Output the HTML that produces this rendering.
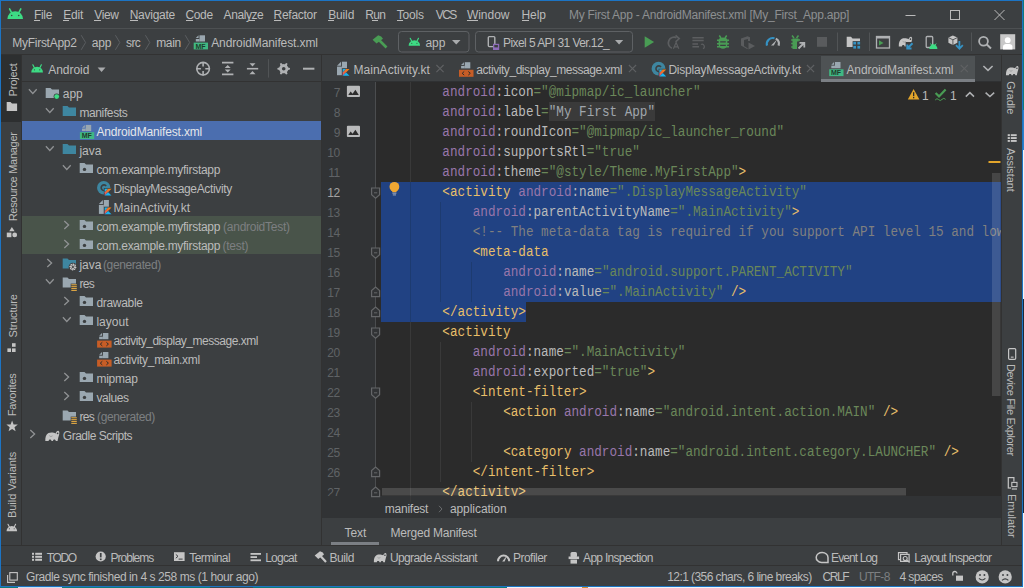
<!DOCTYPE html>
<html><head><meta charset="utf-8"><style>
html,body{margin:0;padding:0;width:1024px;height:588px;overflow:hidden;background:#0f7a7a;}
#r div,#r svg{position:absolute;}
#r{position:absolute;left:0;top:0;width:1024px;height:588px;overflow:hidden;}
</style></head><body><div id="r">
<div style="left:0px;top:0px;width:1024px;height:588px;background:#0f7a7a;"></div>
<div style="left:1023px;top:110px;width:1px;height:40px;background:#2f80c8;"></div>
<div style="left:1023px;top:150px;width:1px;height:149px;background:#f2f4f6;"></div>
<div style="left:1023px;top:299px;width:1px;height:214px;background:#1d2a36;"></div>
<div style="left:1023px;top:513px;width:1px;height:75px;background:#f2f4f6;"></div>
<div style="left:18px;top:587px;width:44px;height:1px;background:#cfe0f0;"></div>
<div style="left:210px;top:587px;width:43px;height:1px;background:#3a4a50;"></div>
<div style="left:507px;top:587px;width:517px;height:1px;background:#f2f4f6;"></div>
<div style="left:582px;top:587px;width:6px;height:1px;background:#d08a2a;"></div>
<div style="left:0px;top:0px;width:1023px;height:587px;background:#1c74c4;"></div>
<div style="left:1px;top:1px;width:1021px;height:585px;background:#3c3f41;"></div>
<div style="left:1px;top:28px;width:1021px;height:1px;background:#4d5052;"></div>
<div style="left:1px;top:54px;width:1021px;height:1px;background:#323232;"></div>
<div style="left:1px;top:55px;width:20px;height:490px;background:#3c3f41;"></div>
<div style="left:1px;top:55px;width:20px;height:67px;background:#2d2f30;"></div>
<div style="left:21px;top:55px;width:1px;height:490px;background:#323232;"></div>
<div style="left:22px;top:55px;width:299px;height:26px;background:#3c3f41;"></div>
<div style="left:22px;top:81px;width:299px;height:1px;background:#323232;"></div>
<div style="left:321px;top:55px;width:1px;height:490px;background:#323232;"></div>
<div style="left:22px;top:121px;width:299px;height:19px;background:#4b6eaf;"></div>
<div style="left:22px;top:216px;width:299px;height:38px;background:#49544a;"></div>
<div style="left:322px;top:55px;width:679px;height:27px;background:#3c3f41;"></div>
<div style="left:322px;top:81px;width:679px;height:1px;background:#2f3133;"></div>
<div style="left:821px;top:56px;width:154px;height:26px;background:#4e5254;"></div>
<div style="left:821px;top:79px;width:154px;height:3px;background:#7b7f84;"></div>
<div style="left:1001px;top:55px;width:1px;height:490px;background:#323232;"></div>
<div style="left:1002px;top:55px;width:20px;height:490px;background:#3c3f41;"></div>
<div style="left:322px;top:82px;width:679px;height:414px;background:#2b2b2b;"></div>
<div style="left:322px;top:82px;width:53px;height:414px;background:#313335;"></div>
<div style="left:375px;top:82px;width:1px;height:414px;background:#4a4c4e;"></div>
<div style="left:381px;top:182px;width:620px;height:120px;background:#214283;"></div>
<div style="left:381px;top:302px;width:145px;height:20px;background:#214283;"></div>
<div style="left:549px;top:102px;width:106px;height:19px;background:#3a3a3a;"></div>
<div style="left:322px;top:496px;width:679px;height:22px;background:#313335;"></div>
<div style="left:322px;top:518px;width:679px;height:27px;background:#3c3f41;"></div>
<div style="left:331px;top:542px;width:48px;height:3px;background:#7b7f84;"></div>
<div style="left:1px;top:545px;width:1021px;height:1px;background:#323232;"></div>
<div style="left:1px;top:565px;width:1021px;height:1px;background:#323232;"></div>
<div style="left:34.00px;top:8.34px;line-height:15px;font-family:'Liberation Sans', sans-serif;font-size:12px;color:#bbbbbb;white-space:pre;letter-spacing:-0.336px;">File</div>
<div style="left:63.20px;top:8.34px;line-height:15px;font-family:'Liberation Sans', sans-serif;font-size:12px;color:#bbbbbb;white-space:pre;letter-spacing:-0.172px;">Edit</div>
<div style="left:94.20px;top:8.34px;line-height:15px;font-family:'Liberation Sans', sans-serif;font-size:12px;color:#bbbbbb;white-space:pre;letter-spacing:-0.324px;">View</div>
<div style="left:129.70px;top:8.34px;line-height:15px;font-family:'Liberation Sans', sans-serif;font-size:12px;color:#bbbbbb;white-space:pre;letter-spacing:-0.259px;">Navigate</div>
<div style="left:185.50px;top:8.34px;line-height:15px;font-family:'Liberation Sans', sans-serif;font-size:12px;color:#bbbbbb;white-space:pre;letter-spacing:-0.372px;">Code</div>
<div style="left:223.60px;top:8.34px;line-height:15px;font-family:'Liberation Sans', sans-serif;font-size:12px;color:#bbbbbb;white-space:pre;letter-spacing:-0.415px;">Analyze</div>
<div style="left:273.60px;top:8.34px;line-height:15px;font-family:'Liberation Sans', sans-serif;font-size:12px;color:#bbbbbb;white-space:pre;letter-spacing:-0.282px;">Refactor</div>
<div style="left:328.20px;top:8.34px;line-height:15px;font-family:'Liberation Sans', sans-serif;font-size:12px;color:#bbbbbb;white-space:pre;letter-spacing:-0.138px;">Build</div>
<div style="left:365.20px;top:8.34px;line-height:15px;font-family:'Liberation Sans', sans-serif;font-size:12px;color:#bbbbbb;white-space:pre;letter-spacing:-0.672px;">Run</div>
<div style="left:396.70px;top:8.34px;line-height:15px;font-family:'Liberation Sans', sans-serif;font-size:12px;color:#bbbbbb;white-space:pre;letter-spacing:-0.163px;">Tools</div>
<div style="left:435.70px;top:8.34px;line-height:15px;font-family:'Liberation Sans', sans-serif;font-size:12px;color:#bbbbbb;white-space:pre;letter-spacing:-1.562px;">VCS</div>
<div style="left:466.90px;top:8.34px;line-height:15px;font-family:'Liberation Sans', sans-serif;font-size:12px;color:#bbbbbb;white-space:pre;letter-spacing:-0.015px;">Window</div>
<div style="left:521.50px;top:8.34px;line-height:15px;font-family:'Liberation Sans', sans-serif;font-size:12px;color:#bbbbbb;white-space:pre;letter-spacing:-0.097px;">Help</div>
<div style="left:34px;top:20px;width:6px;height:1px;background:#bbbbbb;"></div>
<div style="left:63px;top:20px;width:6px;height:1px;background:#bbbbbb;"></div>
<div style="left:94px;top:20px;width:7px;height:1px;background:#bbbbbb;"></div>
<div style="left:130px;top:20px;width:8px;height:1px;background:#bbbbbb;"></div>
<div style="left:186px;top:20px;width:7px;height:1px;background:#bbbbbb;"></div>
<div style="left:249px;top:20px;width:6px;height:1px;background:#bbbbbb;"></div>
<div style="left:274px;top:20px;width:7px;height:1px;background:#bbbbbb;"></div>
<div style="left:328px;top:20px;width:6px;height:1px;background:#bbbbbb;"></div>
<div style="left:372px;top:20px;width:6px;height:1px;background:#bbbbbb;"></div>
<div style="left:397px;top:20px;width:6px;height:1px;background:#bbbbbb;"></div>
<div style="left:467px;top:20px;width:11px;height:1px;background:#bbbbbb;"></div>
<div style="left:522px;top:20px;width:7px;height:1px;background:#bbbbbb;"></div>
<div style="left:568.90px;top:8.34px;line-height:15px;font-family:'Liberation Sans', sans-serif;font-size:12px;color:#8d8f91;white-space:pre;letter-spacing:-0.235px;">My First App - AndroidManifest.xml [My_First_App.app]</div>
<div style="left:12.20px;top:36.34px;line-height:15px;font-family:'Liberation Sans', sans-serif;font-size:12px;color:#bbbbbb;white-space:pre;letter-spacing:-0.260px;">MyFirstApp2</div>
<div style="left:91.80px;top:36.34px;line-height:15px;font-family:'Liberation Sans', sans-serif;font-size:12px;color:#bbbbbb;white-space:pre;letter-spacing:-0.210px;">app</div>
<div style="left:126.00px;top:36.34px;line-height:15px;font-family:'Liberation Sans', sans-serif;font-size:12px;color:#bbbbbb;white-space:pre;letter-spacing:-0.600px;">src</div>
<div style="left:156.20px;top:36.34px;line-height:15px;font-family:'Liberation Sans', sans-serif;font-size:12px;color:#bbbbbb;white-space:pre;letter-spacing:-0.354px;">main</div>
<div style="left:211.20px;top:36.34px;line-height:15px;font-family:'Liberation Sans', sans-serif;font-size:12px;color:#bbbbbb;white-space:pre;letter-spacing:-0.106px;">AndroidManifest.xml</div>
<div style="left:62.80px;top:87.34px;line-height:15px;font-family:'Liberation Sans', sans-serif;font-size:12px;color:#bbbbbb;white-space:pre;letter-spacing:-0.077px;">app</div>
<div style="left:79.40px;top:106.34px;line-height:15px;font-family:'Liberation Sans', sans-serif;font-size:12px;color:#bbbbbb;white-space:pre;letter-spacing:-0.373px;">manifests</div>
<div style="left:96.40px;top:125.34px;line-height:15px;font-family:'Liberation Sans', sans-serif;font-size:12px;color:#e4e6ea;white-space:pre;letter-spacing:-0.159px;">AndroidManifest.xml</div>
<div style="left:79.40px;top:144.34px;line-height:15px;font-family:'Liberation Sans', sans-serif;font-size:12px;color:#bbbbbb;white-space:pre;letter-spacing:-0.029px;">java</div>
<div style="left:96.40px;top:163.34px;line-height:15px;font-family:'Liberation Sans', sans-serif;font-size:12px;color:#bbbbbb;white-space:pre;letter-spacing:-0.288px;">com.example.myfirstapp</div>
<div style="left:113.40px;top:182.34px;line-height:15px;font-family:'Liberation Sans', sans-serif;font-size:12px;color:#bbbbbb;white-space:pre;letter-spacing:-0.338px;">DisplayMessageActivity</div>
<div style="left:113.40px;top:201.34px;line-height:15px;font-family:'Liberation Sans', sans-serif;font-size:12px;color:#bbbbbb;white-space:pre;letter-spacing:0.067px;">MainActivity.kt</div>
<div style="left:96.40px;top:220.34px;line-height:15px;font-family:'Liberation Sans', sans-serif;font-size:12px;color:#bbbbbb;white-space:pre;letter-spacing:-0.288px;">com.example.myfirstapp</div>
<div style="left:223.10px;top:220.34px;line-height:15px;font-family:'Liberation Sans', sans-serif;font-size:12px;color:#7d7f81;white-space:pre;letter-spacing:-0.264px;">(androidTest)</div>
<div style="left:96.40px;top:239.34px;line-height:15px;font-family:'Liberation Sans', sans-serif;font-size:12px;color:#bbbbbb;white-space:pre;letter-spacing:-0.288px;">com.example.myfirstapp</div>
<div style="left:222.40px;top:239.34px;line-height:15px;font-family:'Liberation Sans', sans-serif;font-size:12px;color:#7d7f81;white-space:pre;letter-spacing:-0.241px;">(test)</div>
<div style="left:79.40px;top:258.34px;line-height:15px;font-family:'Liberation Sans', sans-serif;font-size:12px;color:#bbbbbb;white-space:pre;letter-spacing:-0.029px;">java</div>
<div style="left:103.00px;top:258.34px;line-height:15px;font-family:'Liberation Sans', sans-serif;font-size:12px;color:#7d7f81;white-space:pre;letter-spacing:-0.386px;">(generated)</div>
<div style="left:79.40px;top:277.34px;line-height:15px;font-family:'Liberation Sans', sans-serif;font-size:12px;color:#bbbbbb;white-space:pre;letter-spacing:-0.657px;">res</div>
<div style="left:96.40px;top:296.34px;line-height:15px;font-family:'Liberation Sans', sans-serif;font-size:12px;color:#bbbbbb;white-space:pre;letter-spacing:-0.300px;">drawable</div>
<div style="left:96.40px;top:315.34px;line-height:15px;font-family:'Liberation Sans', sans-serif;font-size:12px;color:#bbbbbb;white-space:pre;letter-spacing:0.011px;">layout</div>
<div style="left:113.40px;top:334.34px;line-height:15px;font-family:'Liberation Sans', sans-serif;font-size:12px;color:#bbbbbb;white-space:pre;letter-spacing:-0.484px;">activity_display_message.xml</div>
<div style="left:113.40px;top:353.34px;line-height:15px;font-family:'Liberation Sans', sans-serif;font-size:12px;color:#bbbbbb;white-space:pre;letter-spacing:-0.286px;">activity_main.xml</div>
<div style="left:96.40px;top:372.34px;line-height:15px;font-family:'Liberation Sans', sans-serif;font-size:12px;color:#bbbbbb;white-space:pre;letter-spacing:-0.248px;">mipmap</div>
<div style="left:96.40px;top:391.34px;line-height:15px;font-family:'Liberation Sans', sans-serif;font-size:12px;color:#bbbbbb;white-space:pre;letter-spacing:-0.406px;">values</div>
<div style="left:79.40px;top:410.34px;line-height:15px;font-family:'Liberation Sans', sans-serif;font-size:12px;color:#bbbbbb;white-space:pre;letter-spacing:-0.657px;">res</div>
<div style="left:97.10px;top:410.34px;line-height:15px;font-family:'Liberation Sans', sans-serif;font-size:12px;color:#7d7f81;white-space:pre;letter-spacing:-0.386px;">(generated)</div>
<div style="left:62.80px;top:429.34px;line-height:15px;font-family:'Liberation Sans', sans-serif;font-size:12px;color:#bbbbbb;white-space:pre;letter-spacing:-0.481px;">Gradle Scripts</div>
<div style="left:48.20px;top:63.34px;line-height:15px;font-family:'Liberation Sans', sans-serif;font-size:12px;color:#bbbbbb;white-space:pre;letter-spacing:-0.039px;">Android</div>
<div style="left:353.40px;top:63.34px;line-height:15px;font-family:'Liberation Sans', sans-serif;font-size:12px;color:#bbbbbb;white-space:pre;letter-spacing:0.054px;">MainActivity.kt</div>
<div style="left:476.20px;top:63.34px;line-height:15px;font-family:'Liberation Sans', sans-serif;font-size:12px;color:#bbbbbb;white-space:pre;letter-spacing:-0.434px;">activity_display_message.xml</div>
<div style="left:668.40px;top:63.34px;line-height:15px;font-family:'Liberation Sans', sans-serif;font-size:12px;color:#bbbbbb;white-space:pre;letter-spacing:-0.213px;">DisplayMessageActivity.kt</div>
<div style="left:846.40px;top:63.34px;line-height:15px;font-family:'Liberation Sans', sans-serif;font-size:12px;color:#bbbbbb;white-space:pre;letter-spacing:-0.090px;">AndroidManifest.xml</div>
<div style="left:425.40px;top:36.34px;line-height:15px;font-family:'Liberation Sans', sans-serif;font-size:12px;color:#bbbbbb;white-space:pre;letter-spacing:-0.010px;">app</div>
<div style="left:503.10px;top:36.34px;line-height:15px;font-family:'Liberation Sans', sans-serif;font-size:12px;color:#bbbbbb;white-space:pre;letter-spacing:-0.580px;">Pixel 5 API 31 Ver.12_</div>
<div style="left:384.80px;top:502.34px;line-height:15px;font-family:'Liberation Sans', sans-serif;font-size:12px;color:#bbbbbb;white-space:pre;letter-spacing:-0.245px;">manifest</div>
<div style="left:449.90px;top:502.34px;line-height:15px;font-family:'Liberation Sans', sans-serif;font-size:12px;color:#bbbbbb;white-space:pre;letter-spacing:-0.061px;">application</div>
<div style="left:344.40px;top:526.34px;line-height:15px;font-family:'Liberation Sans', sans-serif;font-size:12px;color:#bbbbbb;white-space:pre;letter-spacing:-0.004px;">Text</div>
<div style="left:390.60px;top:526.34px;line-height:15px;font-family:'Liberation Sans', sans-serif;font-size:12px;color:#bbbbbb;white-space:pre;letter-spacing:-0.232px;">Merged Manifest</div>
<div style="left:46.80px;top:551.34px;line-height:15px;font-family:'Liberation Sans', sans-serif;font-size:12px;color:#bbbbbb;white-space:pre;letter-spacing:-1.363px;">TODO</div>
<div style="left:110.40px;top:551.34px;line-height:15px;font-family:'Liberation Sans', sans-serif;font-size:12px;color:#bbbbbb;white-space:pre;letter-spacing:-0.961px;">Problems</div>
<div style="left:189.20px;top:551.34px;line-height:15px;font-family:'Liberation Sans', sans-serif;font-size:12px;color:#bbbbbb;white-space:pre;letter-spacing:-0.557px;">Terminal</div>
<div style="left:265.20px;top:551.34px;line-height:15px;font-family:'Liberation Sans', sans-serif;font-size:12px;color:#bbbbbb;white-space:pre;letter-spacing:-0.772px;">Logcat</div>
<div style="left:329.40px;top:551.34px;line-height:15px;font-family:'Liberation Sans', sans-serif;font-size:12px;color:#bbbbbb;white-space:pre;letter-spacing:-0.417px;">Build</div>
<div style="left:389.90px;top:551.34px;line-height:15px;font-family:'Liberation Sans', sans-serif;font-size:12px;color:#bbbbbb;white-space:pre;letter-spacing:-0.599px;">Upgrade Assistant</div>
<div style="left:513.00px;top:551.34px;line-height:15px;font-family:'Liberation Sans', sans-serif;font-size:12px;color:#bbbbbb;white-space:pre;letter-spacing:-0.527px;">Profiler</div>
<div style="left:583.10px;top:551.34px;line-height:15px;font-family:'Liberation Sans', sans-serif;font-size:12px;color:#bbbbbb;white-space:pre;letter-spacing:-0.706px;">App Inspection</div>
<div style="left:831.10px;top:551.34px;line-height:15px;font-family:'Liberation Sans', sans-serif;font-size:12px;color:#bbbbbb;white-space:pre;letter-spacing:-0.905px;">Event Log</div>
<div style="left:914.30px;top:551.34px;line-height:15px;font-family:'Liberation Sans', sans-serif;font-size:12px;color:#bbbbbb;white-space:pre;letter-spacing:-0.740px;">Layout Inspector</div>
<div style="left:26.00px;top:570.34px;line-height:15px;font-family:'Liberation Sans', sans-serif;font-size:12px;color:#bbbbbb;white-space:pre;letter-spacing:-0.429px;">Gradle sync finished in 4 s 258 ms (1 hour ago)</div>
<div style="left:667.20px;top:570.34px;line-height:15px;font-family:'Liberation Sans', sans-serif;font-size:12px;color:#bbbbbb;white-space:pre;letter-spacing:-0.571px;">12:1 (356 chars, 6 line breaks)</div>
<div style="left:822.40px;top:570.34px;line-height:15px;font-family:'Liberation Sans', sans-serif;font-size:12px;color:#bbbbbb;white-space:pre;letter-spacing:-1.411px;">CRLF</div>
<div style="left:858.90px;top:570.34px;line-height:15px;font-family:'Liberation Sans', sans-serif;font-size:12px;color:#7d7f81;white-space:pre;letter-spacing:-0.640px;">UTF-8</div>
<div style="left:899.60px;top:570.34px;line-height:15px;font-family:'Liberation Sans', sans-serif;font-size:12px;color:#bbbbbb;white-space:pre;letter-spacing:-0.629px;">4 spaces</div>
<div style="left:921.90px;top:89.34px;line-height:15px;font-family:'Liberation Sans', sans-serif;font-size:12px;color:#bbbbbb;white-space:pre;letter-spacing:0.000px;">1</div>
<div style="left:949.90px;top:89.34px;line-height:15px;font-family:'Liberation Sans', sans-serif;font-size:12px;color:#bbbbbb;white-space:pre;letter-spacing:0.000px;">1</div>
<div style="left:0;top:0;width:1024px;height:588px;clip-path:inset(82px 23px 92px 381px)">
<div style="left:381.6px;top:83px;height:20px;line-height:20px;font-family:'Liberation Mono', monospace;font-size:12.667px;white-space:pre;color:#bababa;transform-origin:0 13.4px;transform:scaleY(1.12)">        <span style="color:#9876aa">android</span><span style="color:#bababa">:icon</span><span style="color:#6a8759">=&quot;@mipmap/ic_launcher&quot;</span></div>
<div style="left:381.6px;top:103px;height:20px;line-height:20px;font-family:'Liberation Mono', monospace;font-size:12.667px;white-space:pre;color:#bababa;transform-origin:0 13.4px;transform:scaleY(1.12)">        <span style="color:#9876aa">android</span><span style="color:#bababa">:label</span><span style="color:#6a8759">=</span><span style="color:#a0a6ac">&quot;My First App&quot;</span></div>
<div style="left:381.6px;top:123px;height:20px;line-height:20px;font-family:'Liberation Mono', monospace;font-size:12.667px;white-space:pre;color:#bababa;transform-origin:0 13.4px;transform:scaleY(1.12)">        <span style="color:#9876aa">android</span><span style="color:#bababa">:roundIcon</span><span style="color:#6a8759">=&quot;@mipmap/ic_launcher_round&quot;</span></div>
<div style="left:381.6px;top:143px;height:20px;line-height:20px;font-family:'Liberation Mono', monospace;font-size:12.667px;white-space:pre;color:#bababa;transform-origin:0 13.4px;transform:scaleY(1.12)">        <span style="color:#9876aa">android</span><span style="color:#bababa">:supportsRtl</span><span style="color:#6a8759">=&quot;true&quot;</span></div>
<div style="left:381.6px;top:163px;height:20px;line-height:20px;font-family:'Liberation Mono', monospace;font-size:12.667px;white-space:pre;color:#bababa;transform-origin:0 13.4px;transform:scaleY(1.12)">        <span style="color:#9876aa">android</span><span style="color:#bababa">:theme</span><span style="color:#6a8759">=&quot;@style/Theme.MyFirstApp&quot;</span><span style="color:#e8bf6a">&gt;</span></div>
<div style="left:381.6px;top:183px;height:20px;line-height:20px;font-family:'Liberation Mono', monospace;font-size:12.667px;white-space:pre;color:#bababa;transform-origin:0 13.4px;transform:scaleY(1.12)">        <span style="color:#e8bf6a">&lt;activity </span><span style="color:#9876aa">android</span><span style="color:#bababa">:name</span><span style="color:#6a8759">=&quot;.DisplayMessageActivity&quot;</span></div>
<div style="left:381.6px;top:203px;height:20px;line-height:20px;font-family:'Liberation Mono', monospace;font-size:12.667px;white-space:pre;color:#bababa;transform-origin:0 13.4px;transform:scaleY(1.12)">            <span style="color:#9876aa">android</span><span style="color:#bababa">:parentActivityName</span><span style="color:#6a8759">=&quot;.MainActivity&quot;</span><span style="color:#e8bf6a">&gt;</span></div>
<div style="left:381.6px;top:223px;height:20px;line-height:20px;font-family:'Liberation Mono', monospace;font-size:12.667px;white-space:pre;color:#bababa;transform-origin:0 13.4px;transform:scaleY(1.12)">            <span style="color:#808080">&lt;!-- The meta-data tag is required if you support API level 15 and lower --&gt;</span></div>
<div style="left:381.6px;top:243px;height:20px;line-height:20px;font-family:'Liberation Mono', monospace;font-size:12.667px;white-space:pre;color:#bababa;transform-origin:0 13.4px;transform:scaleY(1.12)">            <span style="color:#e8bf6a">&lt;meta-data</span></div>
<div style="left:381.6px;top:263px;height:20px;line-height:20px;font-family:'Liberation Mono', monospace;font-size:12.667px;white-space:pre;color:#bababa;transform-origin:0 13.4px;transform:scaleY(1.12)">                <span style="color:#9876aa">android</span><span style="color:#bababa">:name</span><span style="color:#6a8759">=&quot;android.support.PARENT_ACTIVITY&quot;</span></div>
<div style="left:381.6px;top:283px;height:20px;line-height:20px;font-family:'Liberation Mono', monospace;font-size:12.667px;white-space:pre;color:#bababa;transform-origin:0 13.4px;transform:scaleY(1.12)">                <span style="color:#9876aa">android</span><span style="color:#bababa">:value</span><span style="color:#6a8759">=&quot;.MainActivity&quot;</span><span style="color:#e8bf6a"> /&gt;</span></div>
<div style="left:381.6px;top:303px;height:20px;line-height:20px;font-family:'Liberation Mono', monospace;font-size:12.667px;white-space:pre;color:#bababa;transform-origin:0 13.4px;transform:scaleY(1.12)">        <span style="color:#e8bf6a">&lt;/activity&gt;</span></div>
<div style="left:381.6px;top:323px;height:20px;line-height:20px;font-family:'Liberation Mono', monospace;font-size:12.667px;white-space:pre;color:#bababa;transform-origin:0 13.4px;transform:scaleY(1.12)">        <span style="color:#e8bf6a">&lt;activity</span></div>
<div style="left:381.6px;top:343px;height:20px;line-height:20px;font-family:'Liberation Mono', monospace;font-size:12.667px;white-space:pre;color:#bababa;transform-origin:0 13.4px;transform:scaleY(1.12)">            <span style="color:#9876aa">android</span><span style="color:#bababa">:name</span><span style="color:#6a8759">=&quot;.MainActivity&quot;</span></div>
<div style="left:381.6px;top:363px;height:20px;line-height:20px;font-family:'Liberation Mono', monospace;font-size:12.667px;white-space:pre;color:#bababa;transform-origin:0 13.4px;transform:scaleY(1.12)">            <span style="color:#9876aa">android</span><span style="color:#bababa">:exported</span><span style="color:#6a8759">=&quot;true&quot;</span><span style="color:#e8bf6a">&gt;</span></div>
<div style="left:381.6px;top:383px;height:20px;line-height:20px;font-family:'Liberation Mono', monospace;font-size:12.667px;white-space:pre;color:#bababa;transform-origin:0 13.4px;transform:scaleY(1.12)">            <span style="color:#e8bf6a">&lt;intent-filter&gt;</span></div>
<div style="left:381.6px;top:403px;height:20px;line-height:20px;font-family:'Liberation Mono', monospace;font-size:12.667px;white-space:pre;color:#bababa;transform-origin:0 13.4px;transform:scaleY(1.12)">                <span style="color:#e8bf6a">&lt;action </span><span style="color:#9876aa">android</span><span style="color:#bababa">:name</span><span style="color:#6a8759">=&quot;android.intent.action.MAIN&quot;</span><span style="color:#e8bf6a"> /&gt;</span></div>
<div style="left:381.6px;top:423px;height:20px;line-height:20px;font-family:'Liberation Mono', monospace;font-size:12.667px;white-space:pre;color:#bababa;transform-origin:0 13.4px;transform:scaleY(1.12)"></div>
<div style="left:381.6px;top:443px;height:20px;line-height:20px;font-family:'Liberation Mono', monospace;font-size:12.667px;white-space:pre;color:#bababa;transform-origin:0 13.4px;transform:scaleY(1.12)">                <span style="color:#e8bf6a">&lt;category </span><span style="color:#9876aa">android</span><span style="color:#bababa">:name</span><span style="color:#6a8759">=&quot;android.intent.category.LAUNCHER&quot;</span><span style="color:#e8bf6a"> /&gt;</span></div>
<div style="left:381.6px;top:463px;height:20px;line-height:20px;font-family:'Liberation Mono', monospace;font-size:12.667px;white-space:pre;color:#bababa;transform-origin:0 13.4px;transform:scaleY(1.12)">            <span style="color:#e8bf6a">&lt;/intent-filter&gt;</span></div>
<div style="left:381.6px;top:483px;height:20px;line-height:20px;font-family:'Liberation Mono', monospace;font-size:12.667px;white-space:pre;color:#bababa;transform-origin:0 13.4px;transform:scaleY(1.12)">        <span style="color:#e8bf6a">&lt;/activity&gt;</span></div>
</div>
<div style="left:0;top:0;width:1024px;height:588px;clip-path:inset(82px 600px 92px 300px)">
<div style="left:300px;width:40px;top:83px;height:20px;line-height:20px;text-align:right;font-family:'Liberation Sans', sans-serif;font-size:12px;color:#606366;letter-spacing:-0.3px">7</div>
<div style="left:300px;width:40px;top:103px;height:20px;line-height:20px;text-align:right;font-family:'Liberation Sans', sans-serif;font-size:12px;color:#606366;letter-spacing:-0.3px">8</div>
<div style="left:300px;width:40px;top:123px;height:20px;line-height:20px;text-align:right;font-family:'Liberation Sans', sans-serif;font-size:12px;color:#606366;letter-spacing:-0.3px">9</div>
<div style="left:300px;width:40px;top:143px;height:20px;line-height:20px;text-align:right;font-family:'Liberation Sans', sans-serif;font-size:12px;color:#606366;letter-spacing:-0.3px">10</div>
<div style="left:300px;width:40px;top:163px;height:20px;line-height:20px;text-align:right;font-family:'Liberation Sans', sans-serif;font-size:12px;color:#606366;letter-spacing:-0.3px">11</div>
<div style="left:300px;width:40px;top:183px;height:20px;line-height:20px;text-align:right;font-family:'Liberation Sans', sans-serif;font-size:12px;color:#a4a3a3;letter-spacing:-0.3px">12</div>
<div style="left:300px;width:40px;top:203px;height:20px;line-height:20px;text-align:right;font-family:'Liberation Sans', sans-serif;font-size:12px;color:#606366;letter-spacing:-0.3px">13</div>
<div style="left:300px;width:40px;top:223px;height:20px;line-height:20px;text-align:right;font-family:'Liberation Sans', sans-serif;font-size:12px;color:#606366;letter-spacing:-0.3px">14</div>
<div style="left:300px;width:40px;top:243px;height:20px;line-height:20px;text-align:right;font-family:'Liberation Sans', sans-serif;font-size:12px;color:#606366;letter-spacing:-0.3px">15</div>
<div style="left:300px;width:40px;top:263px;height:20px;line-height:20px;text-align:right;font-family:'Liberation Sans', sans-serif;font-size:12px;color:#606366;letter-spacing:-0.3px">16</div>
<div style="left:300px;width:40px;top:283px;height:20px;line-height:20px;text-align:right;font-family:'Liberation Sans', sans-serif;font-size:12px;color:#606366;letter-spacing:-0.3px">17</div>
<div style="left:300px;width:40px;top:303px;height:20px;line-height:20px;text-align:right;font-family:'Liberation Sans', sans-serif;font-size:12px;color:#606366;letter-spacing:-0.3px">18</div>
<div style="left:300px;width:40px;top:323px;height:20px;line-height:20px;text-align:right;font-family:'Liberation Sans', sans-serif;font-size:12px;color:#606366;letter-spacing:-0.3px">19</div>
<div style="left:300px;width:40px;top:343px;height:20px;line-height:20px;text-align:right;font-family:'Liberation Sans', sans-serif;font-size:12px;color:#606366;letter-spacing:-0.3px">20</div>
<div style="left:300px;width:40px;top:363px;height:20px;line-height:20px;text-align:right;font-family:'Liberation Sans', sans-serif;font-size:12px;color:#606366;letter-spacing:-0.3px">21</div>
<div style="left:300px;width:40px;top:383px;height:20px;line-height:20px;text-align:right;font-family:'Liberation Sans', sans-serif;font-size:12px;color:#606366;letter-spacing:-0.3px">22</div>
<div style="left:300px;width:40px;top:403px;height:20px;line-height:20px;text-align:right;font-family:'Liberation Sans', sans-serif;font-size:12px;color:#606366;letter-spacing:-0.3px">23</div>
<div style="left:300px;width:40px;top:423px;height:20px;line-height:20px;text-align:right;font-family:'Liberation Sans', sans-serif;font-size:12px;color:#606366;letter-spacing:-0.3px">24</div>
<div style="left:300px;width:40px;top:443px;height:20px;line-height:20px;text-align:right;font-family:'Liberation Sans', sans-serif;font-size:12px;color:#606366;letter-spacing:-0.3px">25</div>
<div style="left:300px;width:40px;top:463px;height:20px;line-height:20px;text-align:right;font-family:'Liberation Sans', sans-serif;font-size:12px;color:#606366;letter-spacing:-0.3px">26</div>
<div style="left:300px;width:40px;top:483px;height:20px;line-height:20px;text-align:right;font-family:'Liberation Sans', sans-serif;font-size:12px;color:#606366;letter-spacing:-0.3px">27</div>
</div>
<div style="left:-4.30px;top:73.05px;width:37.20px;height:14px;line-height:14px;font-family:'Liberation Sans', sans-serif;font-size:11px;color:#bbbbbb;letter-spacing:-0.150px;white-space:pre;transform-origin:16.60px 6.85px;transform:rotate(-90deg)">Project</div>
<div style="left:-32.20px;top:170.45px;width:93.00px;height:14px;line-height:14px;font-family:'Liberation Sans', sans-serif;font-size:11px;color:#bbbbbb;letter-spacing:-0.285px;white-space:pre;transform-origin:44.50px 6.85px;transform:rotate(-90deg)">Resource Manager</div>
<div style="left:-9.25px;top:309.20px;width:47.10px;height:14px;line-height:14px;font-family:'Liberation Sans', sans-serif;font-size:11px;color:#bbbbbb;letter-spacing:-0.171px;white-space:pre;transform-origin:21.55px 6.85px;transform:rotate(-90deg)">Structure</div>
<div style="left:-9.00px;top:387.85px;width:46.60px;height:14px;line-height:14px;font-family:'Liberation Sans', sans-serif;font-size:11px;color:#bbbbbb;letter-spacing:-0.294px;white-space:pre;transform-origin:21.30px 6.85px;transform:rotate(-90deg)">Favorites</div>
<div style="left:-20.85px;top:477.80px;width:70.30px;height:14px;line-height:14px;font-family:'Liberation Sans', sans-serif;font-size:11px;color:#bbbbbb;letter-spacing:-0.054px;white-space:pre;transform-origin:33.15px 6.85px;transform:rotate(-90deg)">Build Variants</div>
<div style="left:994.70px;top:90.65px;width:37.20px;height:14px;line-height:14px;font-family:'Liberation Sans', sans-serif;font-size:11px;color:#bbbbbb;letter-spacing:0.028px;white-space:pre;transform-origin:16.60px 6.85px;transform:rotate(90deg)">Gradle</div>
<div style="left:989.35px;top:162.80px;width:47.90px;height:14px;line-height:14px;font-family:'Liberation Sans', sans-serif;font-size:11px;color:#bbbbbb;letter-spacing:-0.082px;white-space:pre;transform-origin:21.95px 6.85px;transform:rotate(90deg)">Assistant</div>
<div style="left:965.35px;top:403.10px;width:95.90px;height:14px;line-height:14px;font-family:'Liberation Sans', sans-serif;font-size:11px;color:#bbbbbb;letter-spacing:-0.326px;white-space:pre;transform-origin:45.95px 6.85px;transform:rotate(90deg)">Device File Explorer</div>
<div style="left:989.55px;top:508.60px;width:47.50px;height:14px;line-height:14px;font-family:'Liberation Sans', sans-serif;font-size:11px;color:#bbbbbb;letter-spacing:-0.066px;white-space:pre;transform-origin:21.75px 6.85px;transform:rotate(90deg)">Emulator</div>
<svg style="left:0;top:0" width="1024" height="588" viewBox="0 0 1024 588"><defs><linearGradient id="kg" x1="1" y1="0" x2="0" y2="1"><stop offset="0" stop-color="#f88909"/><stop offset="0.6" stop-color="#e8683a"/><stop offset="1" stop-color="#d4589a"/></linearGradient></defs><path d="M7.4,19 A7.8,7.644 0 0 1 23.0,19 Z" fill="#3ddc84"/><line x1="9.584" y1="8.86" x2="11.69" y2="12.916" stroke="#3ddc84" stroke-width="1.56" stroke-linecap="round"/><line x1="20.816" y1="8.86" x2="18.71" y2="12.916" stroke="#3ddc84" stroke-width="1.56" stroke-linecap="round"/><circle cx="11.69" cy="15.49" r="0.78" fill="#3c3f41"/><circle cx="18.71" cy="15.49" r="0.78" fill="#3c3f41"/><line x1="905.5" y1="15.5" x2="915.5" y2="15.5" stroke="#bbbbbb" stroke-width="1"/><rect x="950.5" y="10.5" width="9" height="9" fill="none" stroke="#bbbbbb" stroke-width="1"/><path d="M994.5,10 L1004.5,20 M1004.5,10 L994.5,20" stroke="#bbbbbb" stroke-width="1"/><path d="M81.2,35.2 L85.60000000000001,42.5 L81.2,49.8" fill="none" stroke="#5a5d60" stroke-width="1"/><path d="M115.39999999999999,35.2 L119.8,42.5 L115.39999999999999,49.8" fill="none" stroke="#5a5d60" stroke-width="1"/><path d="M145.4,35.2 L149.79999999999998,42.5 L145.4,49.8" fill="none" stroke="#5a5d60" stroke-width="1"/><path d="M185.20000000000002,35.2 L189.6,42.5 L185.20000000000002,49.8" fill="none" stroke="#5a5d60" stroke-width="1"/><path d="M372.6,39.7 L378.2,35.2 L381.2,36.4 L383,38.8 L376.5,43.5 Z" fill="#499c54"/><line x1="379" y1="40" x2="386.5" y2="47.5" stroke="#499c54" stroke-width="2.6"/><rect x="398.5" y="31.5" width="70.5" height="20.5" rx="3" fill="none" stroke="#5e6164" stroke-width="1"/><path d="M408.6,45.8 A5.75,5.635 0 0 1 420.1,45.8 Z" fill="#3ddc84"/><line x1="410.21000000000004" y1="38.324999999999996" x2="411.76250000000005" y2="41.315" stroke="#3ddc84" stroke-width="1.15" stroke-linecap="round"/><line x1="418.49" y1="38.324999999999996" x2="416.9375" y2="41.315" stroke="#3ddc84" stroke-width="1.15" stroke-linecap="round"/><circle cx="411.76250000000005" cy="43.2125" r="0.58" fill="#3c3f41"/><circle cx="416.9375" cy="43.2125" r="0.58" fill="#3c3f41"/><path d="M452,40 H460.5 L456.25,44.5 Z" fill="#a8aaac"/><rect x="475.5" y="31.5" width="157" height="20.5" rx="3" fill="none" stroke="#5e6164" stroke-width="1"/><rect x="488.3" y="36.6" width="6.5" height="10" rx="1" fill="none" stroke="#afb1b3" stroke-width="1.4"/><rect x="493" y="43.8" width="6.2" height="6.2" fill="#8d6cb8"/><rect x="494.3" y="45" width="3.6" height="2.4" fill="#3c3f41"/><path d="M615,40 H623.2 L619.1,44.6 Z" fill="#a8aaac"/><path d="M644.7,36.3 L654.1,42 L644.7,47.8 Z" fill="#499c54"/><path d="M676.5,37.6 A5.6,5.6 0 1 0 671.8,48.2" fill="none" stroke="#5c5e60" stroke-width="1.7"/><path d="M675.6,35.3 L679.2,38.6 L675.6,41.8" fill="none" stroke="#5c5e60" stroke-width="1.6"/><path d="M673.4,48.8 L676.1,42.6 L678.8,48.8 M674.4,46.8 H677.8" fill="none" stroke="#5c5e60" stroke-width="1.2"/><path d="M692.4,37.8 H703.7 M692.4,40.5 H703.7 M692.4,44 H698 M692.4,46.8 H699" stroke="#5c5e60" stroke-width="1.5"/><path d="M701,44.5 A2.3,2.3 0 1 1 703,48.8" fill="none" stroke="#5c5e60" stroke-width="1.2"/><path d="M718.6,40.7 A4.4,3.2 0 0 1 727.4,40.7 V44.2 A4.4,4.6 0 0 1 718.6,44.2 Z" fill="#499c54"/><path d="M719.3,35.5 L721,38.0 M726.7,35.5 L725,38.0 M717,40.2 H729 M717,43.7 H729 M717,46.800000000000004 H729" stroke="#499c54" stroke-width="1.5"/><path d="M720.2,41.900000000000006 H725.8 M720.2,45.400000000000006 H725.8" stroke="#3c3f41" stroke-width="1.1"/><path d="M741,38.5 L747.5,36.3 L750,37.3 V41 H748 V39 L744,40 V46 L748,48.5 L747,49 L741,45.5 Z" fill="#5a5c5e"/><path d="M748.5,42.5 L755,46 L748.5,49.5 Z" fill="#5a5c5e"/><path d="M767,45.6 A6,6 0 0 1 774.5,38.3" fill="none" stroke="#3592c4" stroke-width="2.2"/><path d="M775.8,38.6 A6,6 0 0 1 778.6,45.6" fill="none" stroke="#afb1b3" stroke-width="2.2"/><path d="M771,45.6 L777,39.5 L773.8,45.6 Z" fill="#afb1b3"/><path d="M792,35.5 L794,38 M798.5,35.5 L796.5,38 M791.2,40 H800 M791.2,43.5 H797 M791.2,47 H797" stroke="#499c54" stroke-width="1.5"/><path d="M792.5,38.5 H798.5 V41.5 H797 V49 H792.5 Z" fill="#499c54"/><path d="M798.5,48.5 L804,43 M799.5,42.8 H804.3 V47.6" fill="none" stroke="#afb1b3" stroke-width="1.8"/><rect x="817" y="37" width="10" height="9.8" fill="#595b5d"/><line x1="837.5" y1="32.5" x2="837.5" y2="51" stroke="#515456" stroke-width="1"/><line x1="869.5" y1="32.5" x2="869.5" y2="51" stroke="#515456" stroke-width="1"/><line x1="971.5" y1="32.5" x2="971.5" y2="51" stroke="#515456" stroke-width="1"/><path d="M846.7,36.8 H851 L852.5,38.5 H860 V41.5 H853 V47 H846.7 Z" fill="#c5c5c5"/><rect x="852.6" y="41.2" width="8" height="8" fill="#3c3f41"/><rect x="853.3" y="41.8" width="2.7" height="2.7" fill="#3592c4"/><rect x="857.4" y="41.8" width="2.7" height="2.7" fill="#3592c4"/><rect x="853.3" y="45.9" width="2.7" height="2.7" fill="#3592c4"/><rect x="857.4" y="45.9" width="2.7" height="2.7" fill="#3592c4"/><rect x="876.5" y="36.5" width="13" height="11.5" fill="none" stroke="#afb1b3" stroke-width="1.3"/><rect x="876.5" y="36.5" width="13" height="2" fill="#afb1b3"/><path d="M879,40.2 L883.5,42.9 L879,45.6 Z" fill="#499c54"/><rect x="926.2" y="36.5" width="6.5" height="11" rx="1" fill="none" stroke="#afb1b3" stroke-width="1.3"/><path d="M929.3,48.9 A4,4.5 0 0 1 937.4,48.9 Z" fill="#3ddc84"/><path d="M930.5,43.5 L931.5,45 M936.2,43.5 L935.2,45" stroke="#3ddc84" stroke-width="0.9"/><path d="M952.9,35.5 L957.4,37.6 V42.8 L952.9,45 L948.4,42.8 V37.6 Z" fill="#c5c5c5"/><path d="M948.4,37.6 L952.9,39.8 L957.4,37.6 M952.9,39.8 V45" fill="none" stroke="#3c3f41" stroke-width="0.8"/><path d="M959.4,41 V48 M956,45.2 L959.4,48.8 L962.8,45.2" fill="none" stroke="#3592c4" stroke-width="1.8"/><circle cx="983.5" cy="41.2" r="4.4" fill="none" stroke="#afb1b3" stroke-width="1.8"/><line x1="986.6" y1="44.3" x2="991" y2="48.4" stroke="#afb1b3" stroke-width="2"/><rect x="1000.2" y="34.2" width="15" height="15.2" fill="#c8c8c8"/><circle cx="1007.7" cy="40.2" r="2.9" fill="#ffffff"/><path d="M1003,49.4 V46.5 C1003,44.5 1005,44 1007.7,44 C1010.5,44 1012.4,44.5 1012.4,46.5 V49.4 Z" fill="#ffffff"/><path d="M31.2,72.5 A5.9,5.782 0 0 1 43.0,72.5 Z" fill="#3ddc84"/><line x1="32.852000000000004" y1="64.83" x2="34.445" y2="67.898" stroke="#3ddc84" stroke-width="1.18" stroke-linecap="round"/><line x1="41.348" y1="64.83" x2="39.755" y2="67.898" stroke="#3ddc84" stroke-width="1.18" stroke-linecap="round"/><circle cx="34.445" cy="69.845" r="0.59" fill="#3c3f41"/><circle cx="39.755" cy="69.845" r="0.59" fill="#3c3f41"/><path d="M97.6,67.6 H105.5 L101.55,72 Z" fill="#a8aaac"/><circle cx="203.1" cy="68.7" r="6.3" fill="none" stroke="#afb1b3" stroke-width="1.6"/><path d="M203.1,62 V66.5 M203.1,70.9 V75.4 M196.4,68.7 H200.9 M205.3,68.7 H209.8" stroke="#afb1b3" stroke-width="1.6"/><path d="M222,62.6 H233.4 M222,74.4 H233.4" stroke="#afb1b3" stroke-width="1.6"/><path d="M224.7,68 L227.7,65 L230.7,68 Z M224.7,69.6 L227.7,72.4 L230.7,69.6 Z" fill="#afb1b3"/><path d="M246.9,68.7 H258.2" stroke="#afb1b3" stroke-width="1.6"/><path d="M249.5,63.2 H255.5 L252.5,66.4 Z M249.5,74.2 H255.5 L252.5,71 Z" fill="#afb1b3"/><line x1="268.5" y1="59.2" x2="268.5" y2="77.6" stroke="#515456" stroke-width="1"/><path d="M290.00,68.70 L289.95,69.52 L288.14,69.89 L287.95,70.46 L287.68,71.00 L287.35,71.50 L286.95,71.95 L287.54,73.70 L286.85,74.16 L286.11,74.52 L284.89,73.14 L284.30,73.26 L283.70,73.30 L283.10,73.26 L282.51,73.14 L281.29,74.52 L280.55,74.16 L279.86,73.70 L280.45,71.95 L280.05,71.50 L279.72,71.00 L279.45,70.46 L279.26,69.89 L277.45,69.52 L277.40,68.70 L277.45,67.88 L279.26,67.51 L279.45,66.94 L279.72,66.40 L280.05,65.90 L280.45,65.45 L279.86,63.70 L280.55,63.24 L281.29,62.88 L282.51,64.26 L283.10,64.14 L283.70,64.10 L284.30,64.14 L284.89,64.26 L286.11,62.88 L286.85,63.24 L287.54,63.70 L286.95,65.45 L287.35,65.90 L287.68,66.40 L287.95,66.94 L288.14,67.51 L289.95,67.88 Z" fill="#afb1b3"/><circle cx="283.7" cy="68.7" r="1.8" fill="#3c3f41"/><path d="M303,68.7 H314.4" stroke="#afb1b3" stroke-width="2"/><path d="M28.900000000000002,89.3 L32.800000000000004,93.5 L36.7,89.3" fill="none" stroke="#909294" stroke-width="1.3"/><path d="M45.9,108.3 L49.800000000000004,112.5 L53.7,108.3" fill="none" stroke="#909294" stroke-width="1.3"/><path d="M45.9,146.29999999999998 L49.800000000000004,150.5 L53.7,146.29999999999998" fill="none" stroke="#909294" stroke-width="1.3"/><path d="M62.9,165.29999999999998 L66.8,169.5 L70.7,165.29999999999998" fill="none" stroke="#909294" stroke-width="1.3"/><path d="M64.3,221 L68.6,225 L64.3,229" fill="none" stroke="#909294" stroke-width="1.3"/><path d="M64.3,240 L68.6,244 L64.3,248" fill="none" stroke="#909294" stroke-width="1.3"/><path d="M47.3,259 L51.6,263 L47.3,267" fill="none" stroke="#909294" stroke-width="1.3"/><path d="M45.9,279.3 L49.800000000000004,283.5 L53.7,279.3" fill="none" stroke="#909294" stroke-width="1.3"/><path d="M64.3,297 L68.6,301 L64.3,305" fill="none" stroke="#909294" stroke-width="1.3"/><path d="M62.9,317.3 L66.8,321.5 L70.7,317.3" fill="none" stroke="#909294" stroke-width="1.3"/><path d="M64.3,373 L68.6,377 L64.3,381" fill="none" stroke="#909294" stroke-width="1.3"/><path d="M64.3,392 L68.6,396 L64.3,400" fill="none" stroke="#909294" stroke-width="1.3"/><path d="M30.3,430 L34.6,434 L30.3,438" fill="none" stroke="#909294" stroke-width="1.3"/><path d="M45.7,87.9 H50.5 L52.0,89.4 H59.0 V97.9 H45.7 Z" fill="#9aa7b0"/><circle cx="56.7" cy="96.6" r="3.1" fill="#3c3f41"/><circle cx="56.7" cy="96.6" r="2.4" fill="#3ddc84"/><path d="M62.7,106 H67.5 L69.0,107.5 H76.0 V116 H62.7 Z" fill="#3e86a0"/><path d="M82.0,127.69000000000001 L84.79,124.9 V127.69000000000001 Z" fill="#9aa7b0"/><rect x="85.69000000000001" y="124.9" width="5.509999999999999" height="6.2" fill="#9aa7b0"/><rect x="82.0" y="128.59" width="3.69" height="2.5100000000000002" fill="#9aa7b0"/><rect x="79.9" y="132.20000000000002" width="14.3" height="6.8" fill="#40b883"/><text x="81.7" y="138.1" font-family="Liberation Sans" font-weight="bold" font-size="7" fill="#1f3b2c">MF</text><path d="M62.7,144 H67.5 L69.0,145.5 H76.0 V154 H62.7 Z" fill="#3e86a0"/><path d="M79.7,163 H84.5 L86.0,164.5 H93.0 V173 H79.7 Z" fill="#9aa7b0"/><circle cx="84.5" cy="169.4" r="1.7" fill="#3c3f41"/><circle cx="103.7" cy="187.7" r="6.7" fill="#3e86a0"/><path d="M106.2,186 A2.8,2.8 0 1 0 106.2,189.4" fill="none" stroke="#3c3f41" stroke-width="1.6"/><rect x="103.9" y="188.0" width="7.6" height="8.4" fill="#3c3f41"/><path d="M104.7,188.8 H108.10000000000001 L104.7,192.20000000000002 Z" fill="#18b4f0"/><path d="M108.10000000000001,188.8 H111.5 L104.7,195.60000000000002 V192.20000000000002 Z" fill="url(#kg)"/><path d="M104.7,195.60000000000002 L108.10000000000001,192.20000000000002 L111.5,195.60000000000002 Z" fill="#18b4f0"/><path d="M98.9,204 L102.9,200 V204 Z" fill="#9aa7b0"/><rect x="103.80000000000001" y="200" width="5.1" height="13.9" fill="#9aa7b0"/><rect x="98.9" y="204.9" width="4.9" height="9.0" fill="#9aa7b0"/><rect x="103.9" y="206.7" width="7.6" height="8.4" fill="#3c3f41"/><path d="M104.7,207.5 H108.10000000000001 L104.7,210.9 Z" fill="#18b4f0"/><path d="M108.10000000000001,207.5 H111.5 L104.7,214.3 V210.9 Z" fill="url(#kg)"/><path d="M104.7,214.3 L108.10000000000001,210.9 L111.5,214.3 Z" fill="#18b4f0"/><path d="M79.7,220 H84.5 L86.0,221.5 H93.0 V230 H79.7 Z" fill="#9aa7b0"/><circle cx="84.5" cy="226.4" r="1.7" fill="#3c3f41"/><path d="M79.7,239 H84.5 L86.0,240.5 H93.0 V249 H79.7 Z" fill="#9aa7b0"/><circle cx="84.5" cy="245.4" r="1.7" fill="#3c3f41"/><path d="M62.7,258.4 H67.5 L69.0,259.9 H76.0 V268.4 H62.7 Z" fill="#3e86a0"/><circle cx="72.9" cy="267" r="4.3" fill="#3c3f41"/><path d="M72.9,267 L76.70,267.00 L75.54,268.81 Z" fill="#c5c5c5"/><path d="M72.9,267 L75.59,269.69 L73.49,270.15 Z" fill="#c5c5c5"/><path d="M72.9,267 L72.90,270.80 L71.09,269.64 Z" fill="#c5c5c5"/><path d="M72.9,267 L70.21,269.69 L69.75,267.59 Z" fill="#c5c5c5"/><path d="M72.9,267 L69.10,267.00 L70.26,265.19 Z" fill="#c5c5c5"/><path d="M72.9,267 L70.21,264.31 L72.31,263.85 Z" fill="#c5c5c5"/><path d="M72.9,267 L72.90,263.20 L74.71,264.36 Z" fill="#c5c5c5"/><path d="M72.9,267 L75.59,264.31 L76.05,266.41 Z" fill="#c5c5c5"/><circle cx="72.9" cy="267" r="0.9" fill="#3c3f41"/><path d="M62.7,277.4 H67.5 L69.0,278.9 H76.0 V287.4 H62.7 Z" fill="#9aa7b0"/><rect x="70.7" y="283.59999999999997" width="6.5" height="7.8" fill="#3c3f41"/><rect x="71.3" y="284.2" width="5.5" height="1.1" fill="#d9a343"/><rect x="71.3" y="286.09999999999997" width="5.5" height="1.1" fill="#d9a343"/><rect x="71.3" y="288.0" width="5.5" height="1.1" fill="#d9a343"/><rect x="71.3" y="289.9" width="5.5" height="1.1" fill="#d9a343"/><path d="M79.7,296 H84.5 L86.0,297.5 H93.0 V306 H79.7 Z" fill="#9aa7b0"/><circle cx="84.5" cy="302.4" r="1.7" fill="#3c3f41"/><path d="M79.7,315 H84.5 L86.0,316.5 H93.0 V325 H79.7 Z" fill="#9aa7b0"/><circle cx="84.5" cy="321.4" r="1.7" fill="#3c3f41"/><path d="M99.19999999999999,335.79 L101.99,333 V335.79 Z" fill="#9aa7b0"/><rect x="102.89" y="333" width="5.509999999999999" height="6.2" fill="#9aa7b0"/><rect x="99.19999999999999" y="336.69" width="3.69" height="2.5100000000000002" fill="#9aa7b0"/><rect x="97.1" y="340.6" width="14.5" height="7" fill="#c75d26"/><path d="M102.3,342.3 L100.3,344.1 L102.3,345.9 M106.39999999999999,342.3 L108.39999999999999,344.1 L106.39999999999999,345.9" fill="none" stroke="#2d2d2d" stroke-width="1"/><path d="M99.19999999999999,354.79 L101.99,352 V354.79 Z" fill="#9aa7b0"/><rect x="102.89" y="352" width="5.509999999999999" height="6.2" fill="#9aa7b0"/><rect x="99.19999999999999" y="355.69" width="3.69" height="2.5100000000000002" fill="#9aa7b0"/><rect x="97.1" y="359.6" width="14.5" height="7" fill="#c75d26"/><path d="M102.3,361.3 L100.3,363.1 L102.3,364.9 M106.39999999999999,361.3 L108.39999999999999,363.1 L106.39999999999999,364.9" fill="none" stroke="#2d2d2d" stroke-width="1"/><path d="M79.7,372 H84.5 L86.0,373.5 H93.0 V382 H79.7 Z" fill="#9aa7b0"/><circle cx="84.5" cy="378.4" r="1.7" fill="#3c3f41"/><path d="M79.7,391 H84.5 L86.0,392.5 H93.0 V401 H79.7 Z" fill="#9aa7b0"/><circle cx="84.5" cy="397.4" r="1.7" fill="#3c3f41"/><path d="M62.7,410.4 H67.5 L69.0,411.9 H76.0 V420.4 H62.7 Z" fill="#9aa7b0"/><rect x="70.7" y="416.59999999999997" width="6.5" height="7.8" fill="#3c3f41"/><rect x="71.3" y="417.2" width="5.5" height="1.1" fill="#d9a343"/><rect x="71.3" y="419.09999999999997" width="5.5" height="1.1" fill="#d9a343"/><rect x="71.3" y="421.0" width="5.5" height="1.1" fill="#d9a343"/><rect x="71.3" y="422.9" width="5.5" height="1.1" fill="#d9a343"/><g transform="translate(45,430.4) scale(1.0)"><path d="M0.3,10.7 C0.2,7 1,4 3.5,2.7 C6,1.6 9,2.3 10.6,3 C11.2,1.2 12.4,0.1 13.4,0.4 C14.6,0.9 14.6,3.3 13.9,5 L13.3,7 C13,8.5 12.6,9.8 12.6,10.7 H10.8 C10.8,9.8 10.1,9.2 9.3,9.2 C8.6,9.2 8,9.8 8,10.7 H6.5 C6.5,9.8 5.8,9.2 5,9.2 C4.2,9.2 3.6,9.8 3.6,10.7 Z" fill="#c5c5c5"/><circle cx="12.6" cy="2.9" r="0.9" fill="#3c3f41"/><path d="M4.3,5.2 Q5.8,7.2 7.6,5.4" fill="none" stroke="#3c3f41" stroke-width="0.6" stroke-opacity="0.5"/></g><path d="M195.79999999999998,38.089999999999996 L198.58999999999997,35.3 V38.089999999999996 Z" fill="#9aa7b0"/><rect x="199.48999999999998" y="35.3" width="5.509999999999999" height="6.2" fill="#9aa7b0"/><rect x="195.79999999999998" y="38.989999999999995" width="3.69" height="2.5100000000000002" fill="#9aa7b0"/><rect x="193.7" y="42.599999999999994" width="14.3" height="6.8" fill="#40b883"/><text x="195.5" y="48.5" font-family="Liberation Sans" font-weight="bold" font-size="7" fill="#1f3b2c">MF</text><g transform="translate(898.5,36.3) scale(0.95)"><path d="M0.3,10.7 C0.2,7 1,4 3.5,2.7 C6,1.6 9,2.3 10.6,3 C11.2,1.2 12.4,0.1 13.4,0.4 C14.6,0.9 14.6,3.3 13.9,5 L13.3,7 C13,8.5 12.6,9.8 12.6,10.7 H10.8 C10.8,9.8 10.1,9.2 9.3,9.2 C8.6,9.2 8,9.8 8,10.7 H6.5 C6.5,9.8 5.8,9.2 5,9.2 C4.2,9.2 3.6,9.8 3.6,10.7 Z" fill="#c5c5c5"/><circle cx="12.6" cy="2.9" r="0.9" fill="#3c3f41"/><path d="M4.3,5.2 Q5.8,7.2 7.6,5.4" fill="none" stroke="#3c3f41" stroke-width="0.6" stroke-opacity="0.5"/></g><rect x="905.6" y="42" width="8" height="9" fill="#3c3f41"/><path d="M912.5,43.2 L907.5,48.2 M907.3,44.5 V48.6 H911.5" fill="none" stroke="#3592c4" stroke-width="2"/><path d="M6.7,102 H10.5 L12,103.5 H17.1 V110.9 H6.7 Z" fill="#c5c5c5"/><path d="M11.9,227 L14.6,231.2 H9.2 Z" fill="#c5c5c5"/><rect x="6.8" y="232.6" width="4.6" height="4.6" fill="#c5c5c5"/><circle cx="14.7" cy="234.9" r="2.4" fill="#c5c5c5"/><rect x="12" y="343.2" width="3.6" height="3.6" fill="#c5c5c5"/><rect x="7.4" y="348.4" width="3.6" height="3.6" fill="#c5c5c5"/><rect x="12" y="348.4" width="3.6" height="3.6" fill="#c5c5c5"/><path d="M12.10,420.40 L13.57,424.38 L17.81,424.55 L14.48,427.17 L15.63,431.25 L12.10,428.90 L8.57,431.25 L9.72,427.17 L6.39,424.55 L10.63,424.38 Z" fill="#c5c5c5"/><path d="M6.5,531.2 A5.3,5.194 0 0 1 17.1,531.2 Z" fill="#c5c5c5"/><line x1="7.984000000000001" y1="524.3100000000001" x2="9.415000000000001" y2="527.066" stroke="#c5c5c5" stroke-width="1.06" stroke-linecap="round"/><line x1="15.616" y1="524.3100000000001" x2="14.185" y2="527.066" stroke="#c5c5c5" stroke-width="1.06" stroke-linecap="round"/><circle cx="9.415000000000001" cy="528.815" r="0.53" fill="#3c3f41"/><circle cx="14.185" cy="528.815" r="0.53" fill="#3c3f41"/><g transform="translate(1005.7,65.7) scale(0.89)"><path d="M0.3,10.7 C0.2,7 1,4 3.5,2.7 C6,1.6 9,2.3 10.6,3 C11.2,1.2 12.4,0.1 13.4,0.4 C14.6,0.9 14.6,3.3 13.9,5 L13.3,7 C13,8.5 12.6,9.8 12.6,10.7 H10.8 C10.8,9.8 10.1,9.2 9.3,9.2 C8.6,9.2 8,9.8 8,10.7 H6.5 C6.5,9.8 5.8,9.2 5,9.2 C4.2,9.2 3.6,9.8 3.6,10.7 Z" fill="#c5c5c5"/><circle cx="12.6" cy="2.9" r="0.9" fill="#3c3f41"/><path d="M4.3,5.2 Q5.8,7.2 7.6,5.4" fill="none" stroke="#3c3f41" stroke-width="0.6" stroke-opacity="0.5"/></g><rect x="1007.7" y="134.2" width="2.2" height="1.9" fill="#c5c5c5"/><rect x="1010.8" y="134.2" width="5.9" height="1.9" fill="#c5c5c5"/><rect x="1007.7" y="137.1" width="2.2" height="1.9" fill="#c5c5c5"/><rect x="1010.8" y="137.1" width="5.9" height="1.9" fill="#c5c5c5"/><rect x="1007.7" y="140.0" width="2.2" height="1.9" fill="#c5c5c5"/><rect x="1010.8" y="140.0" width="5.9" height="1.9" fill="#c5c5c5"/><rect x="1008.6" y="348.6" width="7.1" height="10.7" rx="1" fill="none" stroke="#c5c5c5" stroke-width="1.2"/><rect x="1010.8" y="356.6" width="2.8" height="1.1" fill="#c5c5c5"/><rect x="1008.3" y="477.6" width="5.6" height="10.4" fill="none" stroke="#c5c5c5" stroke-width="1.2"/><rect x="1011" y="481.6" width="7" height="8.4" fill="#3c3f41"/><rect x="1011.8" y="482.4" width="5.2" height="4.2" fill="none" stroke="#c5c5c5" stroke-width="1.1"/><rect x="1011.8" y="488.4" width="5.2" height="1.2" fill="#c5c5c5"/><path d="M337,65.7 L341,61.7 V65.7 Z" fill="#9aa7b0"/><rect x="341.9" y="61.7" width="5.1" height="13.5" fill="#9aa7b0"/><rect x="337" y="66.60000000000001" width="4.9" height="8.6" fill="#9aa7b0"/><rect x="341.9" y="68.2" width="7.6" height="8.4" fill="#3c3f41"/><path d="M342.7,69 H346.09999999999997 L342.7,72.4 Z" fill="#18b4f0"/><path d="M346.09999999999997,69 H349.5 L342.7,75.8 V72.4 Z" fill="url(#kg)"/><path d="M342.7,75.8 L346.09999999999997,72.4 L349.5,75.8 Z" fill="#18b4f0"/><path d="M461.1,64.99000000000001 L463.89000000000004,62.2 V64.99000000000001 Z" fill="#9aa7b0"/><rect x="464.79" y="62.2" width="5.509999999999999" height="6.2" fill="#9aa7b0"/><rect x="461.1" y="65.89000000000001" width="3.69" height="2.5100000000000002" fill="#9aa7b0"/><rect x="459" y="69.8" width="14.5" height="7" fill="#c75d26"/><path d="M464.2,71.5 L462.2,73.3 L464.2,75.10000000000001 M468.3,71.5 L470.3,73.3 L468.3,75.10000000000001" fill="none" stroke="#2d2d2d" stroke-width="1"/><circle cx="658.5" cy="68.7" r="6.9" fill="#3e86a0"/><path d="M661,67 A2.8,2.8 0 1 0 661,70.4" fill="none" stroke="#3c3f41" stroke-width="1.6"/><rect x="658.6" y="68.8" width="7.6" height="8.4" fill="#3c3f41"/><path d="M659.4,69.6 H662.8 L659.4,73.0 Z" fill="#18b4f0"/><path d="M662.8,69.6 H666.1999999999999 L659.4,76.39999999999999 V73.0 Z" fill="url(#kg)"/><path d="M659.4,76.39999999999999 L662.8,73.0 L666.1999999999999,76.39999999999999 Z" fill="#18b4f0"/><path d="M831.3000000000001,64.79 L834.09,62 V64.79 Z" fill="#9aa7b0"/><rect x="834.99" y="62" width="5.509999999999999" height="6.2" fill="#9aa7b0"/><rect x="831.3000000000001" y="65.69000000000001" width="3.69" height="2.5100000000000002" fill="#9aa7b0"/><rect x="829.2" y="69.3" width="14.3" height="6.8" fill="#40b883"/><text x="831.0" y="75.2" font-family="Liberation Sans" font-weight="bold" font-size="7" fill="#1f3b2c">MF</text><path d="M436.4,65 L443.6,72.2 M443.6,65 L436.4,72.2" stroke="#5f6163" stroke-width="1.1"/><path d="M628.9,65 L636.1,72.2 M636.1,65 L628.9,72.2" stroke="#5f6163" stroke-width="1.1"/><path d="M806.9,65 L814.1,72.2 M814.1,65 L806.9,72.2" stroke="#5f6163" stroke-width="1.1"/><path d="M960.6999999999999,65 L967.9,72.2 M967.9,65 L960.6999999999999,72.2" stroke="#5f6163" stroke-width="1.1"/><path d="M983.4,66 L988,70.4 L992.6,66" fill="none" stroke="#afb1b3" stroke-width="1.6"/><path d="M913.6,89 L919.4,99.4 H907.8 Z" fill="#e2a52b"/><rect x="913" y="92.2" width="1.3" height="4" fill="#2b2b2b"/><rect x="913" y="97" width="1.3" height="1.3" fill="#2b2b2b"/><path d="M935.6,93 L939,96.4 L945.6,89.6" fill="none" stroke="#499c54" stroke-width="2.2"/><path d="M935.2,100 Q937,97.6 938.6,99.6 T942,99.4 T945.6,99.4" fill="none" stroke="#499c54" stroke-width="1"/><path d="M965.8,96.6 L969.9,92.6 L974,96.6" fill="none" stroke="#afb1b3" stroke-width="1.5"/><path d="M985.6,92.6 L989.9,96.6 L994.2,92.6" fill="none" stroke="#afb1b3" stroke-width="1.5"/><rect x="410" y="82" width="1" height="100" fill="#393939"/><rect x="410" y="182" width="1" height="140" fill="#1d3b70"/><rect x="410" y="322" width="1" height="180" fill="#393939"/><rect x="440" y="202" width="1" height="100" fill="#1d3b70"/><rect x="440" y="342" width="1" height="140" fill="#393939"/><rect x="471" y="262" width="1" height="40" fill="#1d3b70"/><rect x="471" y="402" width="1" height="60" fill="#393939"/><rect x="375" y="82" width="1" height="414" fill="#4b4d4f"/><path d="M371.6,188 H379.6 V194.7 L375.6,198.2 L371.6,194.7 Z" fill="#313335" stroke="#646668" stroke-width="1.2"/><rect x="374" y="192.3" width="3.2" height="1" fill="#646668"/><path d="M371.6,248 H379.6 V254.7 L375.6,258.2 L371.6,254.7 Z" fill="#313335" stroke="#646668" stroke-width="1.2"/><rect x="374" y="252.3" width="3.2" height="1" fill="#646668"/><path d="M371.6,328 H379.6 V334.7 L375.6,338.2 L371.6,334.7 Z" fill="#313335" stroke="#646668" stroke-width="1.2"/><rect x="374" y="332.3" width="3.2" height="1" fill="#646668"/><path d="M371.6,388 H379.6 V394.7 L375.6,398.2 L371.6,394.7 Z" fill="#313335" stroke="#646668" stroke-width="1.2"/><rect x="374" y="392.3" width="3.2" height="1" fill="#646668"/><path d="M371.6,296.7 H379.6 V290.5 L375.6,287 L371.6,290.5 Z" fill="#313335" stroke="#646668" stroke-width="1.2"/><rect x="374" y="292.3" width="3.2" height="1" fill="#646668"/><path d="M371.6,316.7 H379.6 V310.5 L375.6,307 L371.6,310.5 Z" fill="#313335" stroke="#646668" stroke-width="1.2"/><rect x="374" y="312.3" width="3.2" height="1" fill="#646668"/><path d="M371.6,476.7 H379.6 V470.5 L375.6,467 L371.6,470.5 Z" fill="#313335" stroke="#646668" stroke-width="1.2"/><rect x="374" y="472.3" width="3.2" height="1" fill="#646668"/><path d="M371.6,496.7 H379.6 V490.5 L375.6,487 L371.6,490.5 Z" fill="#313335" stroke="#646668" stroke-width="1.2"/><rect x="374" y="492.3" width="3.2" height="1" fill="#646668"/><rect x="346.9" y="85.8" width="13.1" height="11.3" rx="1" fill="#b9babb"/><path d="M348.3,95.0 L350.6,91.39999999999999 L352.6,93.8 L355.4,89.7 L358.8,95.0 Z" fill="#2d2d2d"/><rect x="346.9" y="125.8" width="13.1" height="11.3" rx="1" fill="#b9babb"/><path d="M348.3,135.0 L350.6,131.4 L352.6,133.8 L355.4,129.7 L358.8,135.0 Z" fill="#2d2d2d"/><circle cx="394.4" cy="186.8" r="4.9" fill="#f0a732"/><path d="M391.6,189 H397.2 L396.4,192.3 H392.4 Z" fill="#f0a732"/><rect x="392.4" y="192.6" width="4" height="1.2" fill="#8a9bb8"/><rect x="392.8" y="194.3" width="3.2" height="1.2" fill="#8a9bb8"/><rect x="992" y="173" width="8.5" height="223" fill="#ffffff" fill-opacity="0.13"/><rect x="382" y="488" width="524" height="7.5" fill="#ffffff" fill-opacity="0.15"/><rect x="988.5" y="161" width="12" height="2" fill="#e2a52b"/><path d="M439,505.8 L442,509 L439,512.2" fill="none" stroke="#6a6c6e" stroke-width="1"/><rect x="32" y="552.8" width="2" height="2" fill="#c5c5c5"/><rect x="35.2" y="552.8" width="6.8" height="2" fill="#c5c5c5"/><rect x="32" y="555.8" width="2" height="2" fill="#c5c5c5"/><rect x="35.2" y="555.8" width="6.8" height="2" fill="#c5c5c5"/><rect x="32" y="558.8" width="2" height="2" fill="#c5c5c5"/><rect x="35.2" y="558.8" width="6.8" height="2" fill="#c5c5c5"/><circle cx="100.7" cy="556.5" r="5.1" fill="#c5c5c5"/><rect x="99.9" y="553" width="1.7" height="4.4" fill="#3c3f41"/><rect x="99.9" y="558.5" width="1.7" height="1.6" fill="#3c3f41"/><rect x="174" y="552.2" width="10.6" height="8.8" fill="#c5c5c5"/><path d="M175.8,554.4 L178,556.3 L175.8,558.2" fill="none" stroke="#3c3f41" stroke-width="1"/><rect x="178.6" y="558.6" width="4" height="1" fill="#3c3f41"/><rect x="250.5" y="553" width="10.5" height="1.8" fill="#c5c5c5"/><rect x="250.5" y="556.2" width="6.5" height="1.8" fill="#c5c5c5"/><rect x="250.5" y="559.4" width="10.5" height="1.8" fill="#c5c5c5"/><path d="M314.7,555.4 L320,551.3 L322.8,552.5 L324,554.5 L318.3,559 Z" fill="#c5c5c5"/><line x1="320.5" y1="556" x2="326" y2="562" stroke="#c5c5c5" stroke-width="2.2"/><g transform="translate(373.6,552.6) scale(0.9)"><path d="M0.3,10.7 C0.2,7 1,4 3.5,2.7 C6,1.6 9,2.3 10.6,3 C11.2,1.2 12.4,0.1 13.4,0.4 C14.6,0.9 14.6,3.3 13.9,5 L13.3,7 C13,8.5 12.6,9.8 12.6,10.7 H10.8 C10.8,9.8 10.1,9.2 9.3,9.2 C8.6,9.2 8,9.8 8,10.7 H6.5 C6.5,9.8 5.8,9.2 5,9.2 C4.2,9.2 3.6,9.8 3.6,10.7 Z" fill="#c5c5c5"/><circle cx="12.6" cy="2.9" r="0.9" fill="#3c3f41"/><path d="M4.3,5.2 Q5.8,7.2 7.6,5.4" fill="none" stroke="#3c3f41" stroke-width="0.6" stroke-opacity="0.5"/></g><path d="M498,561.2 A5.6,5.6 0 0 1 509.2,561.2" fill="none" stroke="#c5c5c5" stroke-width="2"/><path d="M502.2,561.4 L507,555.6 L504.6,561.4 Z" fill="#c5c5c5"/><rect x="570.5" y="551.9" width="6.5" height="5.6" rx="1.5" fill="#c5c5c5"/><rect x="568.6" y="556.5" width="10.5" height="2.6" fill="#c5c5c5"/><rect x="570.5" y="559.6" width="6.5" height="4" fill="#c5c5c5"/><path d="M828,562.6 H821.5 A5.9,5.1 0 1 1 828,557.5 Z" fill="none" stroke="#c5c5c5" stroke-width="1.5"/><rect x="898.5" y="552.6" width="8.5" height="7" fill="none" stroke="#c5c5c5" stroke-width="1.2"/><rect x="900.6" y="554.4" width="8.5" height="7" fill="#3c3f41" stroke="#c5c5c5" stroke-width="1.2"/><circle cx="905.2" cy="558.5" r="2" fill="#3c3f41" stroke="#c5c5c5" stroke-width="1.1"/><line x1="906.6" y1="560" x2="909.6" y2="562.6" stroke="#c5c5c5" stroke-width="1.3"/><rect x="9.8" y="572.6" width="7.5" height="7.5" fill="none" stroke="#c5c5c5" stroke-width="1.1"/><path d="M7.6,575 V582.4 H15" fill="none" stroke="#c5c5c5" stroke-width="1.1"/><rect x="956" y="575.6" width="7" height="5.2" fill="#c5c5c5"/><path d="M952.8,575.6 V573.6 A2.1,2.1 0 0 1 957,573.6" fill="none" stroke="#c5c5c5" stroke-width="1.3"/><circle cx="982.2" cy="576.9" r="6.6" fill="#c5c5c5"/><circle cx="980" cy="575" r="0.95" fill="#3c3f41"/><circle cx="984.4" cy="575" r="0.95" fill="#3c3f41"/><path d="M979,578.3 Q982.2,581.6 985.4,578.3" fill="none" stroke="#3c3f41" stroke-width="1.1"/><circle cx="1005.2" cy="576.9" r="6.6" fill="#c5c5c5"/><circle cx="1003" cy="575" r="0.95" fill="#3c3f41"/><circle cx="1007.4" cy="575" r="0.95" fill="#3c3f41"/><path d="M1002,580.4 Q1005.2,577.2 1008.4,580.4" fill="none" stroke="#3c3f41" stroke-width="1.1"/></svg>
</div></body></html>
